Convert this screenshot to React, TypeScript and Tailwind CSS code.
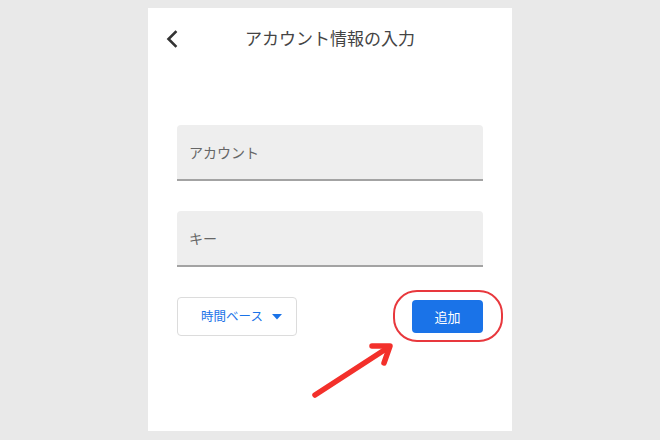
const font = { fontFamily: '"Noto Sans CJK JP", "Noto Sans", sans-serif' };

const App = () => {
  return (
    <div className="w-full h-[440px] bg-[#e9e9e9] flex justify-center pt-[8px]" style={font}>
      <div className="relative w-[364px] h-[423px] bg-white">
        {/* header */}
        <div className="relative h-[60px] flex items-center justify-center">
          <svg className="absolute left-[17px] top-[22px] w-[14px] h-[18px]" viewBox="0 0 14 18" fill="none">
            <path d="M10.5 2 L3.5 9 L10.5 16" stroke="#333" strokeWidth="2.6" strokeLinecap="square" />
          </svg>
          <div className="text-[17px] text-[#444]">アカウント情報の入力</div>
        </div>

        <div className="px-[29px] mt-[57px] flex flex-col gap-[30px]">
          <div className="h-[56px] bg-[#eeeeee] rounded-t-[4px] border-b-2 border-[#a3a3a3] flex items-center px-[12px]">
            <span className="text-[14px] text-[#666]">アカウント</span>
          </div>
          <div className="h-[56px] bg-[#eeeeee] rounded-t-[4px] border-b-2 border-[#a3a3a3] flex items-center px-[12px]">
            <span className="text-[14px] text-[#666]">キー</span>
          </div>

          <div className="flex items-center justify-between">
            <div className="h-[39px] w-[120px] border border-[#dcdcdc] rounded-[4px] flex items-center pl-[23px] pr-[14px] justify-between">
              <span className="text-[12.5px] text-[#1a73e8]">時間ベース</span>
              <svg className="w-[10px] h-[6px]" viewBox="0 0 10 6">
                <path d="M0 0 L10 0 L5 5.5 Z" fill="#1a73e8" />
              </svg>
            </div>
            <div className="relative">
              <button className="w-[71px] h-[33px] bg-[#1a73e8] rounded-[4px] text-white text-[13px]">
                追加
              </button>
              <div className="absolute -left-[19px] -right-[20px] -top-[10px] -bottom-[9px] border-2 border-[#e8383d] rounded-[24px]" />
            </div>
          </div>
        </div>

        {/* red pointer arrow */}
        <svg className="absolute left-[160px] top-[330px] w-[90px] h-[65px]" viewBox="0 0 90 65" fill="none">
          <path d="M7 57 L81 9" stroke="#f3302b" strokeWidth="5.5" strokeLinecap="round" />
          <path d="M64 8 L82 8 L76 25" stroke="#f3302b" strokeWidth="5.5" strokeLinecap="round" strokeLinejoin="round" />
        </svg>
      </div>
    </div>
  );
};

export default App;
